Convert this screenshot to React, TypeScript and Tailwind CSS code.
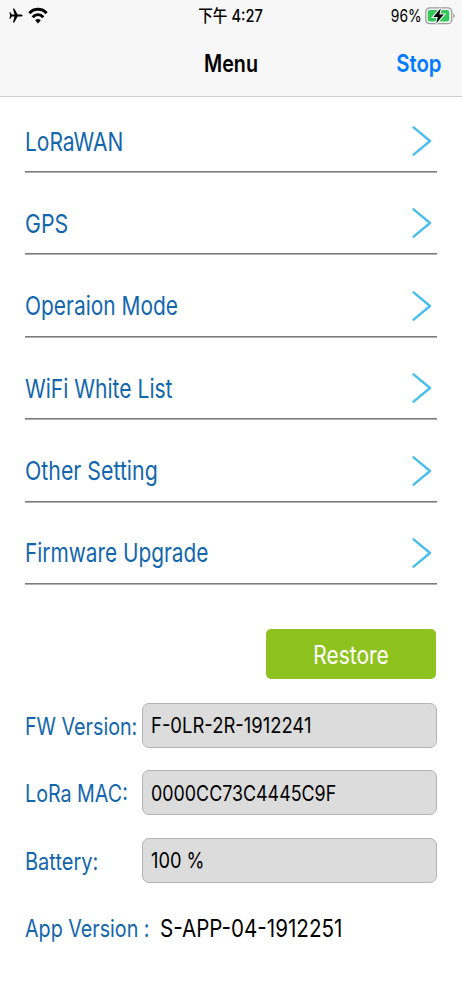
import { clsx } from "clsx";

type MenuItem = {
  label: string;
  scale: string;
};

type InfoField = {
  label: string;
  value: string;
  labelScale: string;
  valueScale: string;
};

const menuItems: MenuItem[] = [
  { label: "LoRaWAN", scale: "scale-x-[0.807]" },
  { label: "GPS", scale: "scale-x-[0.82]" },
  { label: "Operaion Mode", scale: "scale-x-[0.805]" },
  { label: "WiFi White List", scale: "scale-x-[0.81]" },
  { label: "Other Setting", scale: "scale-x-[0.82]" },
  { label: "Firmware Upgrade", scale: "scale-x-[0.801]" },
];

const infoFields: InfoField[] = [
  { label: "FW Version:", value: "F-0LR-2R-1912241", labelScale: "scale-x-[0.82]", valueScale: "scale-x-[0.838]" },
  { label: "LoRa MAC:", value: "0000CC73C4445C9F", labelScale: "scale-x-[0.82]", valueScale: "scale-x-[0.812]" },
  { label: "Battery:", value: "100 %", labelScale: "scale-x-[0.835]", valueScale: "scale-x-[0.83]" },
];

function AirplaneIcon() {
  return (
    <svg width="14" height="15" viewBox="0 0 14 15" fill="#000">
      <path d="M13.6 7.5c0-.7-.9-1.1-1.8-1.1H8.7L5.2.6H3.9l1.6 5.8H2.8L1.4 4.3H.4l.7 3.2-.7 3.2h1l1.4-2.1h2.7l-1.6 5.8h1.3l3.5-5.8h3.1c.9 0 1.8-.4 1.8-1.1z" />
    </svg>
  );
}

function WifiIcon() {
  return (
    <svg width="20" height="18" viewBox="0 0 20 18" fill="none" stroke="#000" strokeWidth="2.9">
      <path d="M1.4 6.2C6 .9 14 .9 18.6 6.2" />
      <path d="M4.7 10.2c2.9-3.4 7.7-3.4 10.6 0" />
      <path d="M10 16.6l-2.8-3.3c1.5-1.7 4.1-1.7 5.6 0z" fill="#000" stroke="none" />
    </svg>
  );
}

function BatteryIcon() {
  return (
    <svg width="31" height="18" viewBox="0 0 31 18" fill="none">
      <rect x="0.8" y="0.9" width="26" height="15.8" rx="4" stroke="#9b9b9b" strokeWidth="1.3" />
      <path d="M28.4 6.2c1.7.8 1.7 4.4 0 5.2z" fill="#9b9b9b" />
      <rect x="2.8" y="3" width="21.5" height="11.6" rx="2" fill="#34c759" />
      <path d="M15.8 1.2L8.4 9.9h4.4l-1.6 6.6 7.6-9h-4.5z" fill="#000" stroke="#f7f7f7" strokeWidth="2.2" paintOrder="stroke" />
    </svg>
  );
}

function ChevronIcon() {
  return (
    <svg width="20" height="30" viewBox="0 0 20 30" fill="none" stroke="#45bdee" strokeWidth="2.3" strokeLinecap="round" strokeLinejoin="round">
      <path d="M1.6 1.3L18 15 1.6 28.7" />
    </svg>
  );
}

export default function App() {
  return (
    <div className="h-[1000px] w-[462px] overflow-hidden bg-white font-['Inter','Noto_Sans_CJK_TC',sans-serif] text-black">
      <header className="h-[97px] border-b border-[#cfcfcf] bg-[#f7f7f7]">
        <div className="grid h-8 grid-cols-3 items-center pr-[6px] pl-[9px] text-[17px] leading-8">
          <div className="flex items-center gap-[5px] pb-px">
            <AirplaneIcon />
            <WifiIcon />
          </div>
          <div className="flex justify-center pr-[3px] whitespace-nowrap">
            <span className="scale-x-[0.86] font-medium">下午 4:27</span>
          </div>
          <div className="flex items-center justify-end gap-[3px]">
            <span className="origin-right scale-x-[0.82]">96%</span>
            <BatteryIcon />
          </div>
        </div>
        <div className="grid h-16 grid-cols-3 items-center text-[24px] font-semibold">
          <h1 className="col-start-2 scale-x-[0.82] text-center">Menu</h1>
          <button className="origin-right scale-x-[0.85] pr-[24px] text-right text-[#007aff]">Stop</button>
        </div>
      </header>

      <nav className="flex flex-col gap-[21.4px] px-[25px] pt-[14px]">
        {menuItems.map((item) => (
          <div
            key={item.label}
            className="flex h-[61px] items-center justify-between border-b border-[#7a7a7a] pr-[5px] shadow-[0_1px_0_#b0b0b0]"
          >
            <span className={clsx("origin-left text-[26px] whitespace-nowrap text-[#1266ab]", item.scale)}>
              {item.label}
            </span>
            <ChevronIcon />
          </div>
        ))}
      </nav>

      <div className="flex justify-end pt-[45px] pr-[26px]">
        <button className="h-[50px] w-[170px] rounded-[5px] bg-[#8ec31f] pt-[3px] text-[25px] text-white">
          <span className="inline-block scale-x-[0.84]">Restore</span>
        </button>
      </div>

      <section className="flex flex-col gap-[22.5px] pt-[24px] pr-[25px] pl-[25px]">
        {infoFields.map((field) => (
          <div key={field.label} className="flex h-[45px] items-center">
            <div className="w-[116.5px] shrink-0 pt-[3px]">
              <span className={clsx("inline-block origin-left text-[24px] whitespace-nowrap text-[#1266ab]", field.labelScale)}>
                {field.label}
              </span>
            </div>
            <div className="flex h-full flex-1 items-center rounded-[7px] border border-[#b3b3b3] bg-[#dcdcdc] pt-px pl-[8px]">
              <span className={clsx("origin-left text-[22px] whitespace-nowrap", field.valueScale)}>{field.value}</span>
            </div>
          </div>
        ))}
        <div className="flex h-[45px] items-center pt-[3px] text-[24px] whitespace-nowrap">
          <div className="w-[135px] shrink-0">
            <span className="inline-block origin-left scale-x-[0.82] text-[#1266ab]">App Version :</span>
          </div>
          <span className="origin-left scale-x-[0.858]">S-APP-04-1912251</span>
        </div>
      </section>
    </div>
  );
}
